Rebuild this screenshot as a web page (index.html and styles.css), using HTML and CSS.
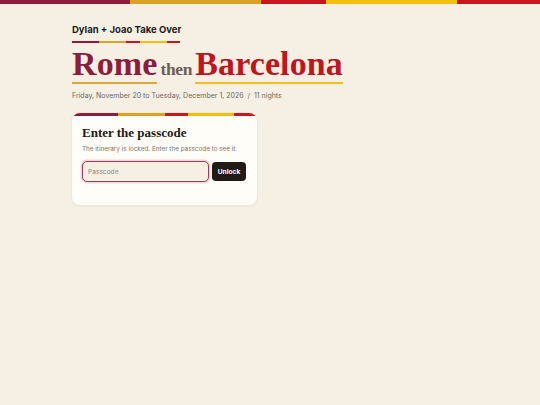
FILE: index.html
```html
<!DOCTYPE html>
<html lang="en">
<head>
<meta charset="utf-8">
<title>Rome then Barcelona</title>
<link rel="stylesheet" href="styles.css">
</head>
<body>
<div class="topbar">
  <span class="seg maroon w1"></span><span class="seg gold w2"></span><span class="seg red w3"></span><span class="seg yellow w4"></span><span class="seg red w5"></span>
</div>
<main class="page">
  <header class="head">
    <div class="eyebrow">Dylan + Joao Take Over</div>
    <div class="stripe small">
      <span class="seg maroon"></span><span class="seg gold"></span><span class="seg red half"></span><span class="seg yellow"></span><span class="seg red half"></span>
    </div>
    <h1 class="title"><span class="city rome">Rome</span><span class="then">then</span><span class="city bcn">Barcelona</span></h1>
    <p class="dates">Friday, November 20 to Tuesday, December 1, 2026&nbsp; / &nbsp;11 nights</p>
  </header>
  <section class="card">
    <div class="stripe cardstripe">
      <span class="seg maroon"></span><span class="seg gold"></span><span class="seg red half"></span><span class="seg yellow"></span><span class="seg red half"></span>
    </div>
    <div class="cardbody">
      <h2 class="cardtitle">Enter the passcode</h2>
      <p class="cardtext">The itinerary is locked. Enter the passcode to see it.</p>
      <form class="row">
        <input class="pass" type="password" placeholder="Passcode" autofocus>
        <button class="btn" type="button">Unlock</button>
      </form>
    </div>
  </section>
</main>
</body>
</html>
```
FILE: styles.css
```css
* { box-sizing: border-box; }
html, body { margin: 0; padding: 0; }
body {
  background: #f5f0e3;
  font-family: "Inter", "Liberation Sans", sans-serif;
  color: #221a17;
  width: 540px;
  height: 405px;
  overflow: hidden;
}
.topbar { display: flex; height: 4px; }
.seg { display: block; height: 100%; }
.maroon { background: #8c1d3c; }
.gold { background: #dba326; }
.red { background: #c8161e; }
.yellow { background: #f2bf0c; }
.topbar .w1 { width: 130px; }
.topbar .w2 { width: 131px; }
.topbar .w3 { width: 65px; }
.topbar .w4 { width: 131px; }
.topbar .w5 { flex: 1; }

.page { padding: 0 0 0 72px; }
.head { padding-top: 19px; }
.eyebrow {
  font-size: 9.5px;
  font-weight: 700;
  line-height: 13px;
  color: #221a17;
}
.stripe { display: flex; }
.stripe .seg { flex: 2; }
.stripe .seg.half { flex: 1; }
.stripe.small { width: 108px; height: 2px; margin-top: 5px; }

.title {
  margin: 5px 0 0;
  font-family: "Liberation Serif", "Times New Roman", serif;
  font-weight: 700;
  font-size: 34px;
  line-height: 34px;
  display: flex;
  align-items: baseline;
  gap: 3px;
  letter-spacing: 0.1px;
}
.city { display: inline-block; padding-bottom: 2px; border-bottom: 2px solid; line-height: 32px; }
.rome { color: #8c1d3c; border-color: #d9a83a; }
.bcn { color: #c0151f; border-color: #f2c21a; }
.then {
  font-size: 17.5px;
  color: #6f5f55;
  letter-spacing: -0.3px;
}
.dates {
  margin: 5px 0 0;
  font-size: 7px;
  color: #6d6660;
  line-height: 10px;
}

.card {
  margin-top: 12px;
  width: 185px;
  background: #fffdf8;
  border-radius: 8px;
  overflow: hidden;
  box-shadow: 0 0 0 1px #efe8d8, 0 1px 3px rgba(60, 40, 20, 0.05);
}
.cardstripe { height: 3px; }
.cardbody { padding: 9px 10px 23px; }
.cardtitle {
  margin: 0;
  font-family: "Liberation Serif", "Times New Roman", serif;
  font-weight: 700;
  font-size: 13px;
  line-height: 16px;
  color: #221a17;
}
.cardtext {
  margin: 4px 0 0;
  font-size: 6.35px;
  line-height: 9px;
  color: #7a736d;
}
.row { display: flex; gap: 3px; margin-top: 7px; align-items: center; }
.pass {
  width: 127px;
  height: 21px;
  border: 1px solid #9c3c58;
  border-radius: 5px;
  background: #f5f0e3;
  box-shadow: 0 0 0 1.5px #f1d3da;
  padding: 0 5px;
  font-family: "Inter", "Liberation Sans", sans-serif;
  font-size: 6.6px;
  outline: none;
  color: #221a17;
}
.pass::placeholder { color: #8d857e; }
.btn {
  width: 34px;
  height: 19px;
  border: 0;
  border-radius: 4px;
  background: #221a17;
  color: #fff;
  font-family: "Inter", "Liberation Sans", sans-serif;
  font-size: 6.6px;
  font-weight: 700;
  padding: 0;
}
```
